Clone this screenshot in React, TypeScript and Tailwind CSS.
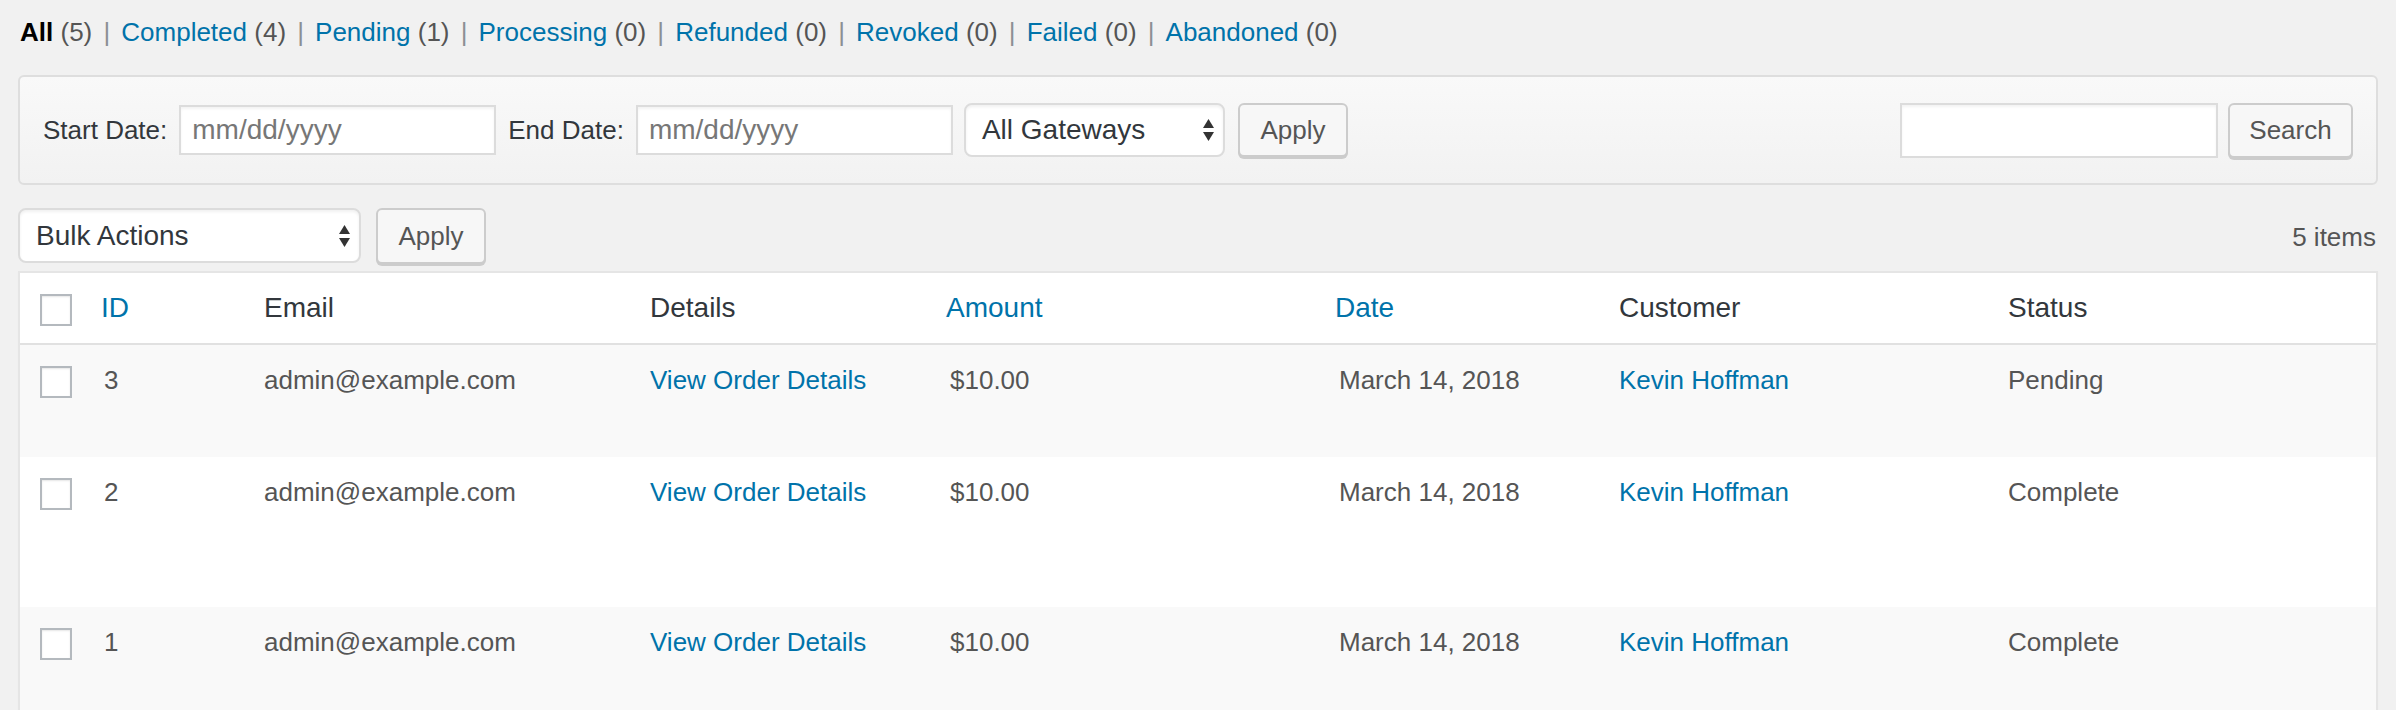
import React from "react";

const tabs = [
    { label: "All", count: 5, current: true },
    { label: "Completed", count: 4 },
    { label: "Pending", count: 1 },
    { label: "Processing", count: 0 },
    { label: "Refunded", count: 0 },
    { label: "Revoked", count: 0 },
    { label: "Failed", count: 0 },
    { label: "Abandoned", count: 0 },
];

const orders = [
    { id: 3, status: "Pending", height: "h-[112px]", bg: "bg-[#f9f9f9]" },
    { id: 2, status: "Complete", height: "h-[150px]", bg: "bg-white" },
    { id: 1, status: "Complete", height: "h-[150px]", bg: "bg-[#f9f9f9]" },
];

const cols = "grid grid-cols-[81px_163px_386px_296px_389px_284px_389px_1fr]";

function Arrows() {
    return (
        <svg width="13" height="24" viewBox="0 0 13 24" className="shrink-0">
            <path d="M6.5 1 L12 10 L1 10 Z" fill="#333" />
            <path d="M6.5 23 L12 14 L1 14 Z" fill="#333" />
        </svg>
    );
}

function Select({ label, className }: { label: string; className: string }) {
    return (
        <div className={`flex items-center justify-between rounded-[8px] border-2 border-[#dcdcdc] bg-white pl-[16px] pr-[8px] text-[28px] text-[#32373c] shadow-[inset_0_2px_3px_rgba(0,0,0,0.06)] ${className}`}>
            <span>{label}</span>
            <Arrows />
        </div>
    );
}

function Button({ label, className }: { label: string; className: string }) {
    return (
        <button className={`flex items-center justify-center rounded-[6px] border-2 border-[#cccccc] bg-[#f7f7f7] text-[26px] text-[#555] shadow-[0_2px_0_#cccccc] ${className}`}>
            {label}
        </button>
    );
}

function Checkbox() {
    return <div className="h-[32px] w-[32px] border-2 border-[#b4b9be] bg-white shadow-[inset_0_1px_2px_rgba(0,0,0,0.1)]" />;
}

export default function App() {
    return (
        <div className="min-h-[710px] w-full bg-[#f1f1f1] px-[18px] font-['Liberation_Sans',Arial,sans-serif] text-[#555]">
            {/* status tabs */}
            <div className="flex h-[64px] items-center pl-[2px] text-[26px]">
                {tabs.map((t, i) => (
                    <React.Fragment key={t.label}>
                        {i > 0 && <span className="inline-block w-[29px] text-center text-[#8c8f94]">|</span>}
                        <span>
                            <span className={t.current ? "font-bold text-black" : "text-[#0073aa]"}>{t.label}</span>{" "}
                            <span className="text-[#555]">({t.count})</span>
                        </span>
                    </React.Fragment>
                ))}
            </div>

            {/* filters */}
            <div className="mt-[11px] flex h-[110px] items-center rounded-[6px] border-2 border-[#dedede] bg-gradient-to-b from-[#f9f9f9] to-[#f2f2f2] pl-[23px] pr-[23px]">
                <span className="text-[26px] text-[#32373c]">Start Date:</span>
                <div className="ml-[12px] flex h-[50px] w-[317px] items-center border-2 border-[#dcdcdc] bg-white pl-[11px] text-[28px] text-[#777] shadow-[inset_0_2px_3px_rgba(0,0,0,0.05)]">mm/dd/yyyy</div>
                <span className="ml-[12px] text-[26px] text-[#32373c]">End Date:</span>
                <div className="ml-[12px] flex h-[50px] w-[317px] items-center border-2 border-[#dcdcdc] bg-white pl-[11px] text-[28px] text-[#777] shadow-[inset_0_2px_3px_rgba(0,0,0,0.05)]">mm/dd/yyyy</div>
                <Select label="All Gateways" className="ml-[11px] h-[54px] w-[261px]" />
                <Button label="Apply" className="ml-[13px] h-[54px] w-[110px]" />
                <div className="ml-auto h-[55px] w-[318px] border-2 border-[#dcdcdc] bg-white shadow-[inset_0_2px_3px_rgba(0,0,0,0.05)]" />
                <Button label="Search" className="ml-[10px] h-[55px] w-[125px]" />
            </div>

            {/* bulk actions */}
            <div className="mt-[23px] flex h-[58px] items-start">
                <Select label="Bulk Actions" className="h-[55px] w-[343px]" />
                <Button label="Apply" className="ml-[15px] h-[56px] w-[110px]" />
                <span className="ml-auto self-center pr-[2px] text-[26px] text-[#555]">5 items</span>
            </div>

            {/* orders table */}
            <div className="mt-[5px] border-2 border-[#e5e5e5] bg-white shadow-[0_1px_1px_rgba(0,0,0,0.04)]">
                <div className={`${cols} h-[72px] border-b-2 border-[#e1e1e1] text-[28px] leading-[36px] text-[#32373c]`}>
                    <div className="pl-[20px] pt-[21px]"><Checkbox /></div>
                    <div className="pt-[17px] text-[#0073aa]">ID</div>
                    <div className="pt-[17px]">Email</div>
                    <div className="pt-[17px]">Details</div>
                    <div className="pt-[17px] text-[#0073aa]">Amount</div>
                    <div className="pt-[17px] text-[#0073aa]">Date</div>
                    <div className="pt-[17px]">Customer</div>
                    <div className="pt-[17px]">Status</div>
                </div>
                {orders.map((o) => (
                    <div key={o.id} className={`${cols} ${o.height} ${o.bg} text-[26px] leading-[36px] text-[#555]`}>
                        <div className="pl-[20px] pt-[21px]"><Checkbox /></div>
                        <div className="pl-[3px] pt-[17px]">{o.id}</div>
                        <div className="pt-[17px]">admin@example.com</div>
                        <div className="pt-[17px] text-[#0073aa]">View Order Details</div>
                        <div className="pl-[4px] pt-[17px]">$10.00</div>
                        <div className="pl-[4px] pt-[17px]">March 14, 2018</div>
                        <div className="pt-[17px] text-[#0073aa]">Kevin Hoffman</div>
                        <div className="pt-[17px]">{o.status}</div>
                    </div>
                ))}
            </div>
        </div>
    );
}
